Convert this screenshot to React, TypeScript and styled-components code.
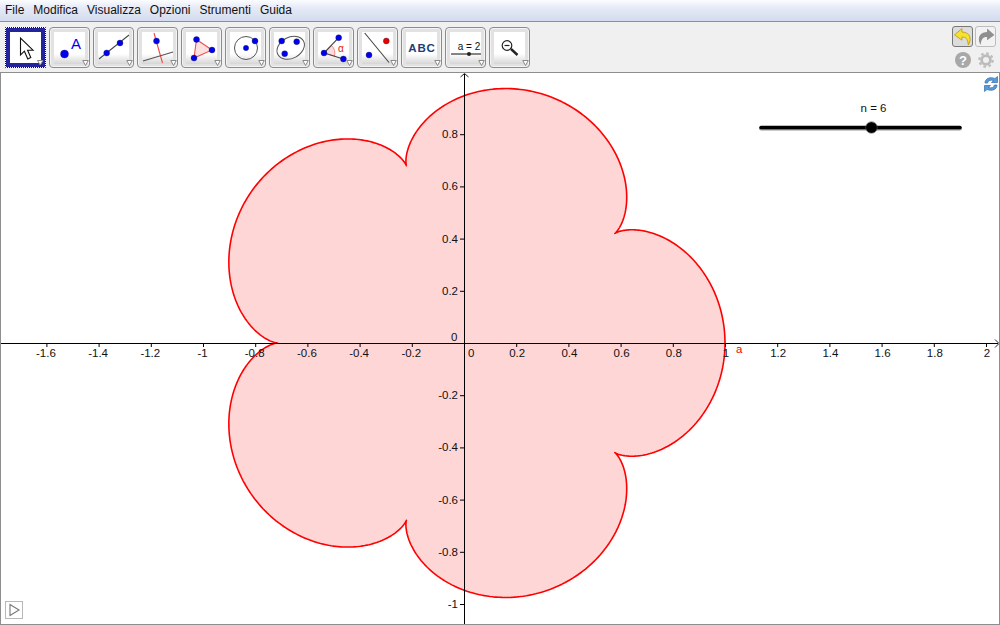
import React from "react";
import styled, { createGlobalStyle } from "styled-components";

const Global = createGlobalStyle`
  html, body { margin: 0; padding: 0; background: #fff; }
  body { font-family: "Liberation Sans", Arial, sans-serif; }
`;

const Window = styled.div`
  width: 1000px;
  height: 625px;
  display: flex;
  flex-direction: column;
  overflow: hidden;
`;

const MenuBar = styled.div`
  height: 21px;
  flex: none;
  display: flex;
  align-items: center;
  gap: 9px;
  padding: 0 0 1px 5px;
  box-sizing: border-box;
  background: linear-gradient(#fbfcfe 0%, #e6ebf6 35%, #d3dcee 100%);
  font-size: 12px;
  color: #111;
`;

const Toolbar = styled.div`
  height: 51px;
  flex: none;
  box-sizing: border-box;
  display: flex;
  align-items: flex-start;
  justify-content: space-between;
  padding: 5px 4px 0 5px;
  background: #f0f0f0;
  border-top: 1px solid #8e8e8e;
`;

const ToolGroup = styled.div`
  display: flex;
  gap: 3px;
`;

const ToolButton = styled.div<{ $selected?: boolean }>`
  position: relative;
  width: 41px;
  height: 41px;
  box-sizing: border-box;
  border-radius: ${(p) => (p.$selected ? "1px" : "4px")};
  border: 1px ${(p) => (p.$selected ? "dotted #111" : "solid #8c8c8c")};
  background: ${(p) => (p.$selected ? "#fff" : "#e2e2e2")};
  padding: ${(p) => (p.$selected ? "0" : "4px 4px 3px 4px")};
  box-shadow: ${(p) => (p.$selected ? "none" : "inset 0 0 0 1px #f4f4f4")};
`;

const ToolFace = styled.div<{ $selected?: boolean }>`
  width: 100%;
  height: 100%;
  box-sizing: border-box;
  border: ${(p) => (p.$selected ? "4px solid #23239c" : "none")};
  background: ${(p) =>
    p.$selected ? "#fff" : "linear-gradient(#ffffff 0%, #ffffff 68%, #d6d6d6 100%)"};
`;

const ToolIcon = styled.svg`
  position: absolute;
  left: -1px;
  top: -1px;
  width: 41px;
  height: 41px;
`;

const HistoryPanel = styled.div`
  display: flex;
  flex-direction: column;
  gap: 4px;
  margin-top: -1px;
`;

const HistoryRow = styled.div`
  display: flex;
  justify-content: space-around;
  gap: 2px;
`;

const HistoryButton = styled.div<{ $active?: boolean }>`
  width: 21px;
  height: 21px;
  box-sizing: border-box;
  border-radius: 3px;
  border: 1px solid ${(p) => (p.$active ? "#777" : "#bcbcbc")};
  background: ${(p) => (p.$active ? "#dcdcdc" : "#f2f2f2")};
  display: flex;
  align-items: center;
  justify-content: center;
`;

const GraphicsView = styled.div`
  position: relative;
  flex: 1;
  min-height: 0;
  box-sizing: border-box;
  border: 1px solid #8e8e8e;
  background: #fff;
`;

const Plot = styled.svg`
  display: block;
  width: 998px;
  height: 551px;
`;

const AxisLabel = styled.text`
  font-family: "Liberation Sans", Arial, sans-serif;
  font-size: 11.5px;
  fill: #111;
`;

const RefreshBadge = styled.svg`
  position: absolute;
  right: 0;
  top: 2px;
  width: 16px;
  height: 18px;
`;

const PlayButton = styled.div`
  position: absolute;
  left: 4px;
  bottom: 5px;
  width: 18px;
  height: 18px;
  box-sizing: border-box;
  border: 1px solid #b8b8b8;
  display: flex;
  align-items: center;
  justify-content: center;
`;

const BLUE = "#0000f0";
const Pt = ({ x, y, r = 3, c = BLUE }: { x: number; y: number; r?: number; c?: string }) => (
  <circle cx={x} cy={y} r={r} fill={c} stroke="#223" strokeWidth={0.35} />
);

const tools: { selected?: boolean; icon: React.ReactNode }[] = [
  {
    selected: true,
    icon: (
      <path
        d="M15.5 11 V28 L19.4 24.2 L22.8 32 L25.8 30.5 L22.6 23.2 L28 23.2 Z"
        fill="#fff"
        stroke="#111"
        strokeWidth={1.1}
      />
    ),
  },
  {
    icon: (
      <>
        <Pt x={15.5} y={27} r={4} />
        <text x={27} y={21.5} textAnchor="middle" fontFamily="Liberation Sans" fontSize={15} fill={BLUE}>
          A
        </text>
      </>
    ),
  },
  {
    icon: (
      <>
        <line x1={6} y1={32} x2={36} y2={8} stroke="#444" strokeWidth={1.1} />
        <Pt x={13.7} y={26} />
        <Pt x={27} y={16} />
      </>
    ),
  },
  {
    icon: (
      <>
        <line x1={17} y1={6} x2={25.5} y2={36} stroke="#f04848" strokeWidth={1.1} />
        <line x1={6} y1={34} x2={36} y2={25} stroke="#555" strokeWidth={1.1} />
        <Pt x={19.5} y={14} />
      </>
    ),
  },
  {
    icon: (
      <>
        <polygon points="15.5,12.5 31,23 13,31" fill="#fbe0e0" stroke="#f05050" strokeWidth={1.1} />
        <Pt x={15.5} y={12.5} />
        <Pt x={31} y={23} />
        <Pt x={13} y={31} />
      </>
    ),
  },
  {
    icon: (
      <>
        <circle cx={21} cy={21} r={11.5} fill="none" stroke="#555" strokeWidth={1} />
        <Pt x={21} y={21} r={2.7} />
        <Pt x={30} y={14} />
      </>
    ),
  },
  {
    icon: (
      <>
        <ellipse cx={21.7} cy={20.8} rx={14.5} ry={10.5} transform="rotate(-28 21.7 20.8)" fill="none" stroke="#555" strokeWidth={1} />
        <Pt x={12.7} y={14} />
        <Pt x={27.7} y={14.7} />
        <Pt x={15.7} y={26.7} />
      </>
    ),
  },
  {
    icon: (
      <>
        <path d="M11 26 L18.5 18.5 A11 11 0 0 1 21.5 29 Z" fill="#fbdcdc" stroke="#f06060" strokeWidth={0.7} />
        <line x1={11} y1={26} x2={25.7} y2={10.7} stroke="#444" strokeWidth={1.1} />
        <line x1={11} y1={26} x2={30.4} y2={32} stroke="#444" strokeWidth={1.1} />
        <Pt x={25.7} y={10.7} />
        <Pt x={11} y={26} />
        <Pt x={30.4} y={32} />
        <text x={28} y={24.5} textAnchor="middle" fontFamily="Liberation Sans" fontSize={10} fill="#e02020">
          α
        </text>
      </>
    ),
  },
  {
    icon: (
      <>
        <line x1={7.7} y1={6} x2={32} y2={35.5} stroke="#444" strokeWidth={1.1} />
        <Pt x={29.3} y={14} c="#e80000" />
        <Pt x={12} y={28} />
      </>
    ),
  },
  {
    icon: (
      <text x={21} y={25} textAnchor="middle" fontFamily="Liberation Sans" fontWeight="bold" fontSize={11.5} letterSpacing={0.9} fill="#1d3f73">
        ABC
      </text>
    ),
  },
  {
    icon: (
      <>
        <text x={24} y={23} textAnchor="middle" fontFamily="Liberation Sans" fontSize={10} fill="#111">
          a = 2
        </text>
        <line x1={6} y1={27} x2={36} y2={27} stroke="#222" strokeWidth={1.1} />
        <circle cx={24} cy={27} r={2} fill="#222" />
      </>
    ),
  },
  {
    icon: (
      <>
        <circle cx={18} cy={18.5} r={4.8} fill="#fff" stroke="#222" strokeWidth={1.2} />
        <line x1={15.5} y1={18.5} x2={20.5} y2={18.5} stroke="#222" strokeWidth={1.2} />
        <line x1={22} y1={22} x2={28.5} y2={28} stroke="#222" strokeWidth={2.4} />
      </>
    ),
  },
];

const OX = 464;
const OY = 343;
const S = 261;

function curvePath(): string {
  const parts: string[] = [];
  const N = 900;
  for (let i = 0; i <= N; i++) {
    const t = (i / N) * 2 * Math.PI;
    const x = (6 / 7) * Math.cos(t) + (1 / 7) * Math.cos(6 * t);
    const y = (6 / 7) * Math.sin(t) + (1 / 7) * Math.sin(6 * t);
    parts.push(`${i ? "L" : "M"}${(OX + x * S).toFixed(2)} ${(OY - y * S).toFixed(2)}`);
  }
  return parts.join(" ") + " Z";
}

const xTicks = [-1.6, -1.4, -1.2, -1, -0.8, -0.6, -0.4, -0.2, 0.2, 0.4, 0.6, 0.8, 1, 1.2, 1.4, 1.6, 1.8, 2];
const yTicks = [0.8, 0.6, 0.4, 0.2, -0.2, -0.4, -0.6, -0.8, -1];

export default function App() {
  return (
    <Window>
      <Global />
      <MenuBar>
        {["File", "Modifica", "Visualizza", "Opzioni", "Strumenti", "Guida"].map((m) => (
          <span key={m}>{m}</span>
        ))}
      </MenuBar>
      <Toolbar>
        <ToolGroup>
          {tools.map((t, i) => (
            <ToolButton key={i} $selected={t.selected}>
              <ToolFace $selected={t.selected} />
              <ToolIcon viewBox="0 0 41 41">
                {t.icon}
                <path
                  d={t.selected ? "M32.5 33.5 H38 L35.2 38 Z" : "M33.8 33.5 H39.3 L36.5 38.5 Z"}
                  fill="#fff"
                  stroke="#8a8a8a"
                  strokeWidth={1}
                />
              </ToolIcon>
            </ToolButton>
          ))}
        </ToolGroup>
        <HistoryPanel>
          <HistoryRow>
            <HistoryButton $active>
              <svg width="18" height="18" viewBox="0 0 17 17">
                <path
                  d="M7.5 0.5 L0.5 6.5 L7.5 11.5 V8.5 C11 8.5 13 10 13.5 16 C16.5 11.5 16.3 4 7.5 3.8 Z"
                  fill="#f8e030"
                  stroke="#b79d12"
                  strokeWidth={0.8}
                />
              </svg>
            </HistoryButton>
            <HistoryButton>
              <svg width="18" height="18" viewBox="0 0 17 17">
                <path
                  d="M9.5 0.5 L16.5 6.5 L9.5 11.5 V8.5 C6 8.5 4 10 3.5 16 C0.5 11.5 0.7 4 9.5 3.8 Z"
                  fill="#8f8f8f"
                />
              </svg>
            </HistoryButton>
          </HistoryRow>
          <HistoryRow>
            <svg width="18" height="18" viewBox="0 0 18 18">
              <circle cx="9" cy="9" r="8" fill="#a8a8a8" />
              <text x="9" y="13.5" textAnchor="middle" fontFamily="Liberation Sans" fontWeight="bold" fontSize="13" fill="#fff">
                ?
              </text>
            </svg>
            <svg width="18" height="18" viewBox="0 0 18 18">
              <circle cx="9" cy="9" r="4.4" fill="none" stroke="#bcbcbc" strokeWidth="2.8" />
              <circle
                cx="9"
                cy="9"
                r="6.7"
                fill="none"
                stroke="#bcbcbc"
                strokeWidth="2.2"
                strokeDasharray="2.6 2.66"
              />
            </svg>
          </HistoryRow>
        </HistoryPanel>
      </Toolbar>
      <GraphicsView>
        <Plot viewBox="1 73 998 551">
          <path d={curvePath()} fill="rgba(255,0,0,0.16)" stroke="#ff0000" strokeWidth={1.6} strokeLinejoin="round" />

          <line x1={1} y1={343.5} x2={998} y2={343.5} stroke="#000" strokeWidth={1} />
          <line x1={464.5} y1={74} x2={464.5} y2={624} stroke="#000" strokeWidth={1} />
          <path d="M995 339.5 L999 343.5 L995 347.5" fill="none" stroke="#222" strokeWidth={1} />
          <path d="M460.5 77 L464.5 73.5 L468.5 77" fill="none" stroke="#222" strokeWidth={1} />

          {xTicks.map((v) => {
            const x = OX + v * S;
            return (
              <g key={v}>
                <line x1={x + 0.5} y1={343} x2={x + 0.5} y2={347} stroke="#000" strokeWidth={1} />
                <AxisLabel x={v > 0 ? x + 1 : x - 0.5} y={357} textAnchor="middle">
                  {v}
                </AxisLabel>
              </g>
            );
          })}
          {yTicks.map((v) => {
            const y = OY - v * S;
            return (
              <g key={v}>
                <line x1={460} y1={y + 0.5} x2={464} y2={y + 0.5} stroke="#000" strokeWidth={1} />
                <AxisLabel x={458} y={y + 4} textAnchor="end">
                  {v}
                </AxisLabel>
              </g>
            );
          })}
          <AxisLabel x={451} y={341}>0</AxisLabel>
          <AxisLabel x={468} y={357}>0</AxisLabel>
          <AxisLabel x={736} y={353} style={{ fill: "#ff0000" }}>a</AxisLabel>

          <AxisLabel x={873.5} y={112} textAnchor="middle">n = 6</AxisLabel>
          <line x1={761} y1={128.5} x2={960} y2={128.5} stroke="#999" strokeWidth={4} strokeLinecap="round" />
          <line x1={761} y1={127.5} x2={960} y2={127.5} stroke="#000" strokeWidth={3.4} strokeLinecap="round" />
          <circle cx={871.5} cy={127.5} r={5.5} fill="#000" />
          <circle cx={871.5} cy={127.5} r={5.8} fill="none" stroke="#555" strokeWidth={0.6} />
        </Plot>
        <RefreshBadge viewBox="0 0 16 18">
          <path d="M2 8 C2 3.5 7 1.5 12 3.5 L14.5 1.5 V7.5 H8.5 L10.8 5.6 C7.5 4.5 5 5.5 4.6 8 Z" fill="#5b9bd8" stroke="#2f6fb0" strokeWidth={0.7} />
          <path d="M14 10 C14 14.5 9 16.5 4 14.5 L1.5 16.5 V10.5 H7.5 L5.2 12.4 C8.5 13.5 11 12.5 11.4 10 Z" fill="#5b9bd8" stroke="#2f6fb0" strokeWidth={0.7} />
        </RefreshBadge>
        <PlayButton>
          <svg width="14" height="14" viewBox="0 0 14 14">
            <path d="M3 1.5 L12 7 L3 12.5 Z" fill="#fff" stroke="#777" strokeWidth={1.1} />
          </svg>
        </PlayButton>
      </GraphicsView>
    </Window>
  );
}
